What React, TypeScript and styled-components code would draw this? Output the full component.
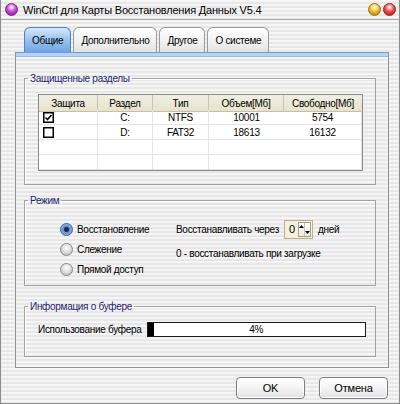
import React from 'react';
import styled, { createGlobalStyle, css } from 'styled-components';

const Global = createGlobalStyle`
  html, body { margin: 0; padding: 0; }
  body {
    width: 400px; height: 404px; overflow: hidden;
    font-family: "Liberation Sans", Arial, sans-serif;
    font-size: 10px; letter-spacing: -0.3px; color: #000;
  }
  * { box-sizing: border-box; }
`;

const stripes = css`
  background: repeating-linear-gradient(to bottom, #f5f5f5 0px, #f5f5f5 2px, #e7e7e7 2px, #e7e7e7 4px);
`;

const Window = styled.div`
  width: 400px; height: 404px;
  ${stripes}
  border: 1px solid #8c8c8c;
  border-top: none;
  display: flex; flex-direction: column;
`;

const TitleBar = styled.div`
  height: 20px;
  border-bottom: 1px solid #a9a9a9;
  display: flex; align-items: center;
  padding: 0 3px 0 4px;
  gap: 5px;
`;

const Title = styled.div`
  flex: 1;
  font-size: 11px;
  letter-spacing: -0.2px;
  white-space: nowrap;
`;

const Light = styled.span<{ $c: string; $d: string }>`
  width: 13px; height: 13px; border-radius: 50%;
  border: 1px solid ${p => p.$d};
  background: radial-gradient(circle at 50% 30%, #ffffff 0%, ${p => p.$c} 45%, ${p => p.$d} 100%);
  flex: none;
`;

const Lights = styled.div`
  display: flex; gap: 2px;
`;

const Body = styled.div`
  flex: 1;
  display: flex; flex-direction: column;
  padding: 7px 10px 0 14px;
`;

const TabRow = styled.div`
  display: flex; align-items: flex-end;
  padding-left: 9px; gap: 2px;
  height: 25px;
`;

const Tab = styled.div<{ $active?: boolean }>`
  height: 25px;
  padding: 0 7px;
  display: flex; align-items: center; justify-content: center;
  border: 1px solid ${p => (p.$active ? '#4f83c4' : '#9a9a9a')};
  border-bottom: none;
  border-radius: 6px 6px 0 0;
  background: ${p => (p.$active
    ? 'linear-gradient(to bottom, #d6e8fb 0%, #9fc6ef 45%, #6ea5e3 100%)'
    : 'linear-gradient(to bottom, #ffffff 0%, #f3f3f3 50%, #e3e3e3 100%)')};
  white-space: nowrap;
`;

const Panel = styled.div`
  height: 316px;
  border: 1px solid #939393;
  border-top: 1px solid #6f9bd0;
  display: flex; flex-direction: column;
  padding: 0 12px 0 8px;
  ${stripes}
`;

const PanelStrip = styled.div`
  height: 4px;
  flex: none;
  margin: 0 -12px 0 -8px;
  background: #b6d3f2;
  border-bottom: 1px solid #9dbbe0;
`;

const Group = styled.fieldset<{ $mt: number }>`
  flex: none;
  margin: ${p => p.$mt}px 0 0 0;
  padding: 0;
  border: 1px solid #a2a2a2;
  box-shadow: inset 1px 1px 0 #ffffff;
  min-width: 0;
`;

const GroupBody = styled.div<{ $pad: string }>`
  padding: ${p => p.$pad};
`;

const Legend = styled.legend`
  display: block;
  height: 13px;
  padding: 0 2px;
  margin-left: 3px;
  line-height: 13px;
  color: #24246e;
`;

const Table = styled.div`
  display: grid;
  grid-template-columns: 59px 55px 56px 75px 78px;
  grid-auto-rows: 15px;
  border: 1px solid #8a8a8a;
  background: #fff;
`;

const Th = styled.div`
  height: 17px;
  display: flex; align-items: center; justify-content: center;
  background: linear-gradient(to bottom, #f1efe2 0%, #e6e2cd 100%);
  border-right: 1px solid #c9c5b2;
  border-bottom: 1px solid #c4bfa8;
  &:last-child { border-right: none; }
`;

const Td = styled.div<{ $left?: boolean }>`
  display: flex; align-items: center;
  justify-content: ${p => (p.$left ? 'flex-start' : 'center')};
  padding-left: ${p => (p.$left ? '4px' : '0')};
  border-right: 1px solid #e4e4e4;
  border-bottom: 1px solid #e4e4e4;
  &:nth-child(5n) { border-right: none; }
`;

const HeadRow = styled.div`
  display: contents;
`;

const Check = ({ on }: { on: boolean }) => (
  <svg width="11" height="11" viewBox="0 0 11 11">
    <rect x="0.75" y="0.75" width="9.5" height="9.5" fill="#fff" stroke="#000" strokeWidth="1.5" />
    {on && <path d="M2.5 5.5 L4.5 7.5 L8.5 3" fill="none" stroke="#000" strokeWidth="1.6" />}
  </svg>
);

const ModeBody = styled.div`
  display: flex;
`;

const RadioCol = styled.div`
  width: 116px;
  display: flex; flex-direction: column;
`;

const RadioRow = styled.div`
  height: 20px;
  display: flex; align-items: center; gap: 4px;
`;

const RadioDot = styled.span<{ $on?: boolean }>`
  width: 13px; height: 13px; border-radius: 50%;
  flex: none;
  border: 1px solid ${p => (p.$on ? '#3a5f95' : '#8a8a8a')};
  background: ${p => (p.$on
    ? 'radial-gradient(circle at 50% 50%, #1d2a45 0px, #1d2a45 2px, #5d8fd0 3px, #a9ccf2 100%)'
    : 'radial-gradient(circle at 50% 35%, #ffffff 0%, #d6d6d6 60%, #a9a9a9 100%)')};
`;

const InfoCol = styled.div`
  display: flex; flex-direction: column; gap: 4px;
`;

const InfoRow = styled.div`
  height: 20px;
  display: flex; align-items: center; gap: 3px;
  white-space: nowrap;
`;

const Spin = styled.div`
  width: 29px; height: 19px;
  margin: 0 2px;
  border: 1px solid #b7af8e;
  background: #f3f0e0;
  display: flex; align-items: center;
  padding: 0 1px 0 4px;
  justify-content: space-between;
  font-size: 11px;
`;

const SpinBtns = styled.div`
  width: 13px; height: 15px;
  border: 1px solid #a49f86;
  background: linear-gradient(to bottom, #ffffff, #eeeadb);
  display: flex;
`;

const SpinHalf = styled.div<{ $down?: boolean }>`
  flex: 1;
  display: flex; justify-content: center;
  align-items: ${p => (p.$down ? 'flex-end' : 'flex-start')};
  padding: 2px 0;
  & + & { border-left: 1px solid #c9c4ad; }
`;

const Arrow = ({ down }: { down?: boolean }) => (
  <svg width="5" height="3" viewBox="0 0 5 3">
    <path d={down ? 'M0 0 L5 0 L2.5 3 Z' : 'M0 3 L5 3 L2.5 0 Z'} fill="#000" />
  </svg>
);

const BufRow = styled.div`
  height: 15px;
  display: flex; align-items: center; gap: 5px;
  white-space: nowrap;
`;

const Progress = styled.div`
  flex: 1;
  height: 15px;
  position: relative;
  border: 1px solid #1a1a1a;
  background: #fff;
  display: flex; align-items: center; justify-content: center;
`;

const ProgressFill = styled.div`
  position: absolute; left: 0; top: 0; bottom: 0;
  background: #000;
`;

const Footer = styled.div`
  display: flex; justify-content: flex-end;
  gap: 14px;
  margin-top: 9px;
  padding-right: 1px;
`;

const Button = styled.button`
  width: 69px; height: 22px;
  font-family: inherit; font-size: 11px; letter-spacing: -0.2px; color: #000;
  border: 1px solid #7d7d7d;
  border-radius: 4px;
  background: linear-gradient(to bottom, #ffffff 0%, #f4f4f4 50%, #e2e2e2 100%);
  box-shadow: inset 0 0 0 1px #fff;
  padding: 0;
`;

const parts = [
  { on: true, d: 'C:', t: 'NTFS', v: '10001', f: '5754' },
  { on: false, d: 'D:', t: 'FAT32', v: '18613', f: '16132' },
];

export default function App() {
  const usage = 4;
  return (
    <>
      <Global />
      <Window>
        <TitleBar>
          <Light $c="#c84bd8" $d="#7a1d8a" />
          <Title>WinCtrl для Карты Восстановления Данных V5.4</Title>
          <Lights>
            <Light $c="#f0c030" $d="#a0700a" />
            <Light $c="#ec5050" $d="#a01818" />
          </Lights>
        </TitleBar>
        <Body>
          <TabRow>
            <Tab $active>Общие</Tab>
            <Tab>Дополнительно</Tab>
            <Tab>Другое</Tab>
            <Tab>О системе</Tab>
          </TabRow>
          <Panel>
            <PanelStrip />
            <Group $mt={15}>
              <Legend>Защищенные разделы</Legend>
              <GroupBody $pad="9px 12px 13px 13px">
                <Table>
                  <HeadRow>
                    <Th>Защита</Th>
                    <Th>Раздел</Th>
                    <Th>Тип</Th>
                    <Th>Объем[Мб]</Th>
                    <Th>Свободно[Мб]</Th>
                  </HeadRow>
                  {parts.map(p => (
                    <React.Fragment key={p.d}>
                      <Td $left><Check on={p.on} /></Td>
                      <Td>{p.d}</Td>
                      <Td>{p.t}</Td>
                      <Td>{p.v}</Td>
                      <Td>{p.f}</Td>
                    </React.Fragment>
                  ))}
                  {[0, 1].map(i => (
                    <React.Fragment key={i}>
                      <Td /><Td /><Td /><Td /><Td />
                    </React.Fragment>
                  ))}
                </Table>
              </GroupBody>
            </Group>
            <Group $mt={9}>
              <Legend>Режим</Legend>
              <GroupBody $pad="12px 10px 6px 35px">
                <ModeBody>
                  <RadioCol>
                    <RadioRow><RadioDot $on />Восстановление</RadioRow>
                    <RadioRow><RadioDot />Слежение</RadioRow>
                    <RadioRow><RadioDot />Прямой доступ</RadioRow>
                  </RadioCol>
                  <InfoCol>
                    <InfoRow>
                      Восстанавливать через
                      <Spin>
                        0
                        <SpinBtns>
                          <SpinHalf><Arrow /></SpinHalf>
                          <SpinHalf $down><Arrow down /></SpinHalf>
                        </SpinBtns>
                      </Spin>
                      дней
                    </InfoRow>
                    <InfoRow>0 - восстанавливать при загрузке</InfoRow>
                  </InfoCol>
                </ModeBody>
              </GroupBody>
            </Group>
            <Group $mt={14}>
              <Legend>Информация о буфере</Legend>
              <GroupBody $pad="9px 9px 19px 13px">
                <BufRow>
                  Использование буфера
                  <Progress>
                    <ProgressFill style={{ width: `${Math.max(3, usage * 1.6)}px` }} />
                    {usage}%
                  </Progress>
                </BufRow>
              </GroupBody>
            </Group>
          </Panel>
          <Footer>
            <Button>OK</Button>
            <Button>Отмена</Button>
          </Footer>
        </Body>
      </Window>
    </>
  );
}
